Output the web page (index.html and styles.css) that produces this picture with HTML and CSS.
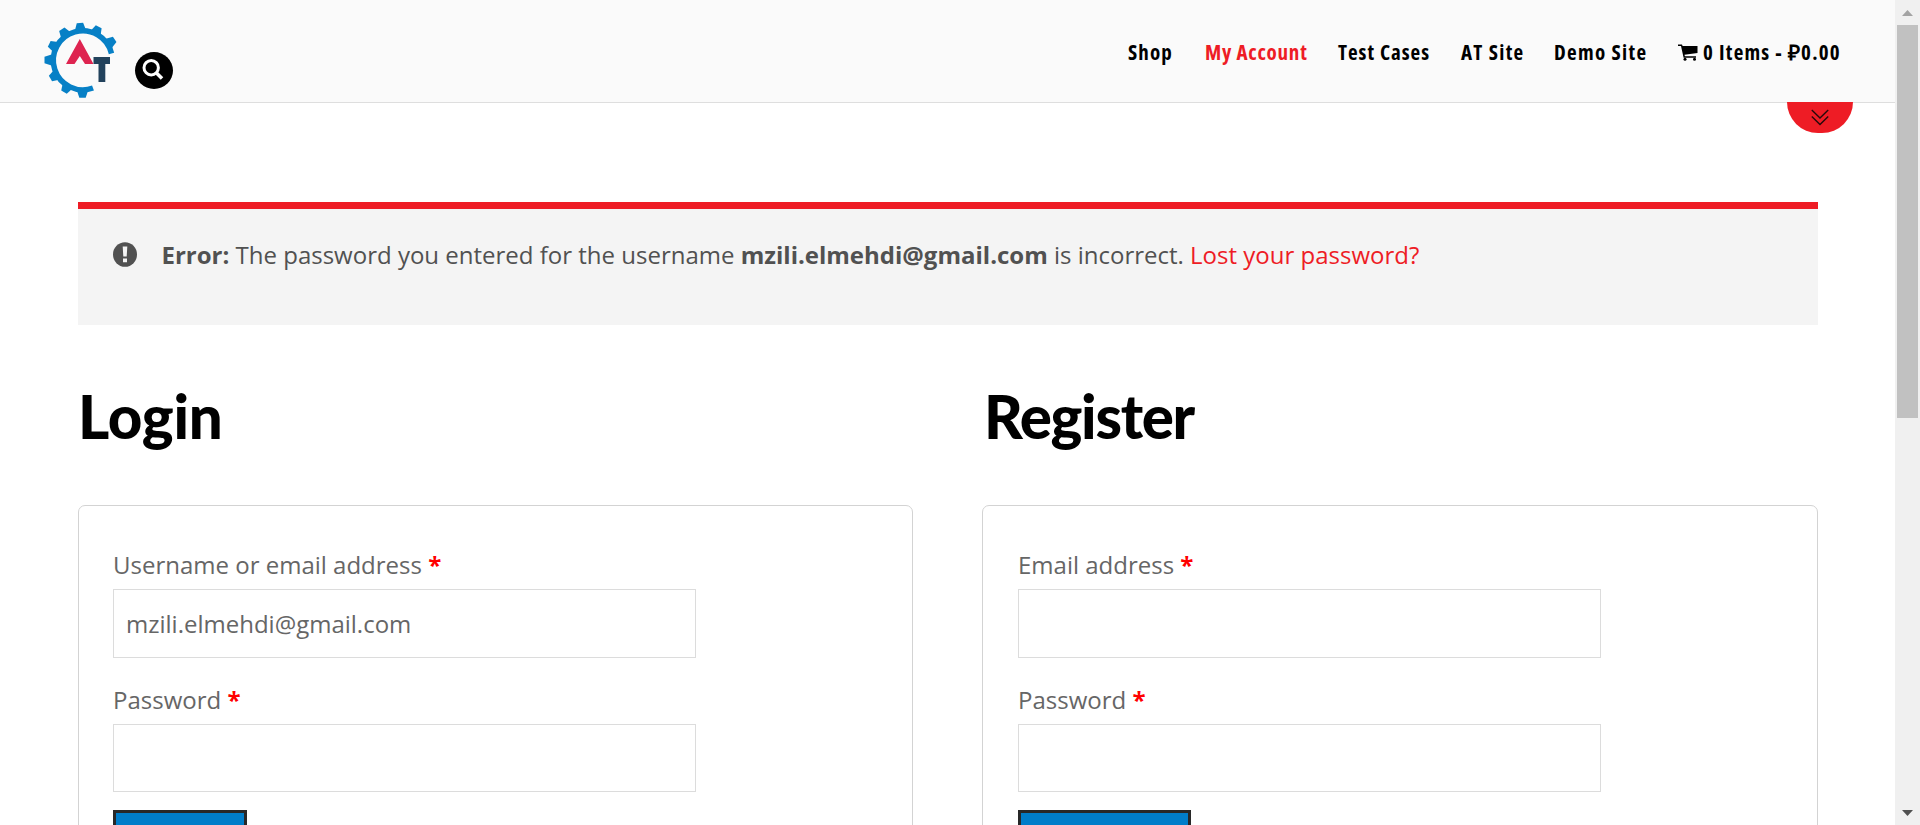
FILE: index.html
```html
<!DOCTYPE html>
<html lang="en">
<head>
<meta charset="utf-8">
<title>My Account</title>
<link rel="stylesheet" href="styles.css">
</head>
<body>
<div class="window">
  <div class="page">
    <header class="header">
      <a class="logo" href="#">
        <svg width="76" height="78" viewBox="43 22 76 78">
          <path d="M111.500 53.500A29.500 29.500 0 1 0 93 88" fill="none" stroke="#0780c6" stroke-width="5.500"/>
          <g fill="#0780c6" transform="translate(82.5 60)">
            <path id="tooth" d="M-5.500-30L-3.200-37H3.200L5.500-30Z" transform="rotate(-4)"/>
            <use href="#tooth" transform="rotate(30)"/>
            <use href="#tooth" transform="translate(1.500 0) rotate(60)"/>
            <use href="#tooth" transform="rotate(-30)"/>
            <use href="#tooth" transform="rotate(-60)"/>
            <use href="#tooth" transform="translate(-1 0) rotate(-86)"/>
            <use href="#tooth" transform="rotate(-116)"/>
            <use href="#tooth" transform="rotate(-146)"/>
            <use href="#tooth" transform="translate(0 .8) rotate(-176)"/>
          </g>
          <path d="M79.800 39L66 64H74.500L79.800 56L85 64H93.500Z" fill="#de2450"/>
          <path d="M93.500 57H110V64H105.300V82H98.500V64H93.500Z" fill="#22425c"/>
        </svg>
      </a>
      <button class="search" aria-label="Search">
        <svg width="22" height="22" viewBox="0 0 22 22" fill="none" stroke="#fff"><circle cx="9.200" cy="8.700" r="7.200" stroke-width="3"/><path d="M14 13.500L20 19.500" stroke-width="3.600"/></svg>
      </button>
      <nav class="nav">
        <a href="#" class="n1">Shop</a>
        <a href="#" class="n2 current">My Account</a>
        <a href="#" class="n3">Test Cases</a>
        <a href="#" class="n4">AT Site</a>
        <a href="#" class="n5">Demo Site</a>
        <a href="#" class="n6"><svg class="cart" width="20" height="17" viewBox="0 0 20 17"><path d="M0 .5H4L4.600 2H19.500V9L6.500 10.700L6.900 12.300H18V13.800H5.600L3 2H0Z"/><circle cx="7" cy="15.300" r="1.500"/><circle cx="16.500" cy="15.300" r="1.500"/></svg><span>0 Items - ₽0.00</span></a>
      </nav>
      <a class="tab" href="#"><svg width="18" height="17" viewBox="0 0 18 17" fill="none" stroke="#26090b" stroke-width="1.400"><path d="M.8 1L9 9L17.200 1M.8 7.500L9 15.500L17.200 7.500"/></svg></a>
    </header>
    <main class="main">
      <div class="notice">
        <svg class="alert" width="24" height="25" viewBox="0 0 24 25"><ellipse cx="12" cy="12.500" rx="12" ry="12.300" fill="#515151"/><path d="M9.700 4.500H14.300L13.700 14.500H10.300ZM10 16.500H14V20.200H10Z" fill="#f4f4f4"/></svg>
        <p class="message"><strong>Error:</strong> The password you entered for the username <strong>mzili.elmehdi@gmail.com</strong> is incorrect. <a href="#">Lost your password?</a></p>
      </div>
      <div class="columns">
        <section class="col">
          <h2 class="title">Login</h2>
          <form class="card">
            <label class="label">Username or email address <b>*</b></label>
            <input class="field" type="text" value="mzili.elmehdi@gmail.com">
            <label class="label second">Password <b>*</b></label>
            <input class="field short" type="password">
            <button class="submit" type="button" aria-label="Login"></button>
          </form>
        </section>
        <section class="col right">
          <h2 class="title">Register</h2>
          <form class="card">
            <label class="label">Email address <b>*</b></label>
            <input class="field" type="text">
            <label class="label second">Password <b>*</b></label>
            <input class="field short" type="password">
            <button class="submit wide" type="button" aria-label="Register"></button>
          </form>
        </section>
      </div>
    </main>
  </div>
  <div class="scrollbar">
    <svg width="11" height="6" viewBox="0 0 11 6"><path d="M0 6L5.500 0L11 6Z" fill="#a3a3a3"/></svg>
    <div class="thumb"></div>
    <svg class="down" width="11" height="6" viewBox="0 0 11 6"><path d="M0 0H11L5.500 6Z" fill="#505050"/></svg>
  </div>
</div>
</body>
</html>
```
FILE: styles.css
```css
* { box-sizing: border-box; }
body { margin: 0; overflow: hidden; background: #fff; font-family: "Open Sans", sans-serif; }
a { text-decoration: none; }
.window { display: flex; width: 1920px; height: 825px; overflow: hidden; }
.page { flex: 1; min-width: 0; height: 825px; overflow: hidden; }
.header { position: relative; display: flex; align-items: flex-start; height: 103px; padding-left: 43px; background: #fafafa; border-bottom: 1px solid #dedede; }
.logo { display: block; height: 78px; margin-top: 22px; }
.logo svg { display: block; }
.search { display: flex; align-items: center; justify-content: center; width: 38px; height: 37px; margin: 52px 0 0 16px; padding: 0; border: 0; border-radius: 50%; background: #000; }
.search svg { margin: -1px 3px 0 0; }
.nav { display: grid; grid-template-columns: 77px 133px 123px 93px 124px 166px; margin: 37px 51px 0 auto; font: 700 21px/30px "Open Sans", sans-serif; font-stretch: 75%; letter-spacing: 1.100px; white-space: nowrap; }
.nav a { color: #000; }
.nav .current { color: #ee1c25; }
.nav .n2 { letter-spacing: .750px; }
.nav .n3 { letter-spacing: 1px; }
.nav .n4, .nav .n5 { letter-spacing: 1.300px; }
.nav .n6 { display: flex; align-items: center; gap: 5px; letter-spacing: 1.200px; }
.tab { position: absolute; right: 42px; top: 102px; display: flex; justify-content: center; width: 66px; height: 31px; padding-top: 7px; border-radius: 0 0 33px 33px; background: #ee1c25; }
.main { padding: 99px 77px 0 78px; }
.notice { display: flex; gap: 24.500px; height: 123px; padding: 33px 35px 0; border-top: 7px solid #ee1c25; background: #f4f4f4; }
.message { margin: -4px 0 0; font-size: 24px; line-height: 34px; color: #515151; white-space: nowrap; }
.message a { color: #ee1c25; }
.columns { display: grid; grid-template-columns: 835px 836px; gap: 69px; }
.title { margin: 0; height: 180px; padding-top: 56px; font: 900 60px/70px Lato, sans-serif; letter-spacing: -.300px; color: #000; }
.right .title { padding-left: 2px; letter-spacing: -1.300px; }
.card { display: flex; flex-direction: column; height: 500px; padding: 41px 34px 0; border: 1px solid #d3d3d3; border-radius: 7px; }
.right .card { padding-left: 35px; }
.label { height: 42px; font-size: 24px; line-height: 36px; color: #666; }
.label b { color: #f00; }
.second { margin-top: 24px; }
.field { width: 583px; height: 69px; padding: 0 12px; border: 1px solid #dcdcdc; background: #fff; font: 24px "Open Sans", sans-serif; color: #666; outline: 0; }
.short { height: 68px; }
.submit { width: 134px; height: 60px; margin-top: 18px; border: 3px solid #282828; background: #007dc9; }
.wide { width: 173px; }
.scrollbar { display: flex; flex-direction: column; align-items: center; width: 25px; height: 825px; padding: 10px 0 9px; background: #f0f0f0; }
.thumb { width: 21px; height: 393px; margin-top: 9px; background: #c1c1c1; }
.down { margin-top: auto; }
```
